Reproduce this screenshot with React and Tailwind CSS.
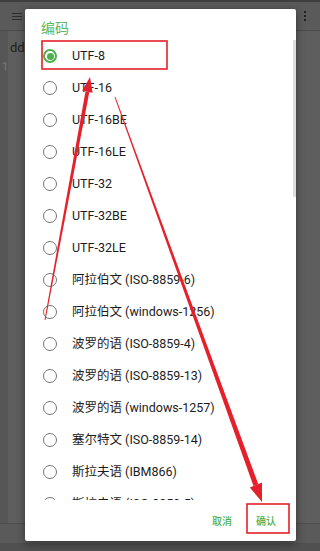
import React from "react";

const items = [
  "UTF-8",
  "UTF-16",
  "UTF-16BE",
  "UTF-16LE",
  "UTF-32",
  "UTF-32BE",
  "UTF-32LE",
  "阿拉伯文 (ISO-8859-6)",
  "阿拉伯文 (windows-1256)",
  "波罗的语 (ISO-8859-4)",
  "波罗的语 (ISO-8859-13)",
  "波罗的语 (windows-1257)",
  "塞尔特文 (ISO-8859-14)",
  "斯拉夫语 (IBM866)",
  "斯拉夫语 (ISO-8859-5)",
];

function Radio({ checked }) {
  return checked ? (
    <span className="flex h-[14px] w-[14px] shrink-0 items-center justify-center rounded-full border-2 border-[#4caf50]">
      <span className="h-[7px] w-[7px] rounded-full bg-[#4caf50]" />
    </span>
  ) : (
    <span className="h-[14px] w-[14px] shrink-0 rounded-full border-[1.5px] border-[#757575]" />
  );
}

export default function App() {
  return (
    <div
      className="relative h-[551px] w-[320px] overflow-hidden bg-[#5e5e5e]"
      style={{ fontFamily: "Roboto, 'Noto Sans CJK SC', sans-serif" }}
    >
      {/* background app (dimmed) */}
      <div className="flex h-full flex-col">
        <div className="h-[2px] bg-[#3e3e3e]" />
        <div className="flex h-[29px] items-center justify-between border-b border-[#4c4c4c] bg-[#5a5a5a] pl-[12px] pr-[14px]">
          <div className="flex w-[10px] flex-col gap-[2px]">
            <span className="h-[1px] bg-[#2e2e2e]" />
            <span className="h-[1px] bg-[#2e2e2e]" />
            <span className="h-[1px] bg-[#2e2e2e]" />
          </div>
          <div className="flex flex-col items-center gap-[2px]">
            <span className="h-[2px] w-[2px] bg-[#222]" />
            <span className="h-[2px] w-[2px] bg-[#222]" />
            <span className="h-[2px] w-[2px] bg-[#222]" />
          </div>
        </div>
        <div className="flex flex-1">
          <div className="w-[8px] bg-[#565656]" />
          <div className="flex-1" />
        </div>
        <div className="h-[20px] border-t border-[#4e4e4e] bg-[#5a5a5a]" />
        <div className="h-[8px] bg-[#505050]" />
      </div>
      <div className="absolute left-[10px] top-[38px] text-[13px] text-[#1e1e1e]">dd</div>
      <div className="absolute left-[2px] top-[59px] text-[11px] text-[#7a7a7a]">1</div>

      {/* dialog */}
      <div className="absolute left-[25px] top-[9px] flex h-[532px] w-[271px] flex-col rounded-[2px] bg-white shadow-[0_2px_8px_rgba(0,0,0,0.45)]">
        <div
          className="flex h-[31px] items-center pl-[16px] pt-[5px] text-[14px] text-[#5cb860]"
          style={{ fontFamily: "'Noto Sans CJK SC', sans-serif" }}
        >
          编码
        </div>
        <div className="relative h-[460px] overflow-hidden">
          {items.map((t, i) => (
            <div key={t} className="flex h-[32px] items-center gap-[15px] pl-[18px]">
              <Radio checked={i === 0} />
              <span className="text-[12.5px] text-[#1c1c1c]">{t}</span>
            </div>
          ))}
          <div className="absolute right-0 top-0 h-[157px] w-[3px] bg-[#dcdcdc]" />
        </div>
        <div
          className="flex flex-1 items-center justify-end gap-[24px] pr-[20px] text-[10px] font-medium text-[#4caf50]"
          style={{ fontFamily: "'Noto Sans CJK SC', sans-serif" }}
        >
          <span>取消</span>
          <span>确认</span>
        </div>
      </div>

      {/* red annotations */}
      <svg className="pointer-events-none absolute left-0 top-0" width="320" height="551" viewBox="0 0 320 551">
        <rect x="42" y="41" width="125" height="28" fill="none" stroke="#e5202a" strokeWidth="1.6" />
        <rect x="247" y="504" width="42" height="29" fill="none" stroke="#e5202a" strokeWidth="1.6" />
        {/* arrow 1: up to UTF-8 */}
        <polygon points="44.5,320 45.5,320 89.3,92.2 85.5,91.4" fill="#e5202a" />
        <polygon points="90,77 92.6,92.8 82.2,90.8" fill="#e5202a" />
        {/* arrow 2: down to 确认 */}
        <polygon points="114.6,97.2 115.4,96.8 258.3,484.2 253.5,486.0" fill="#e5202a" />
        <polygon points="262,502 262,482.6 249.8,487.4" fill="#e5202a" />
      </svg>
    </div>
  );
}
